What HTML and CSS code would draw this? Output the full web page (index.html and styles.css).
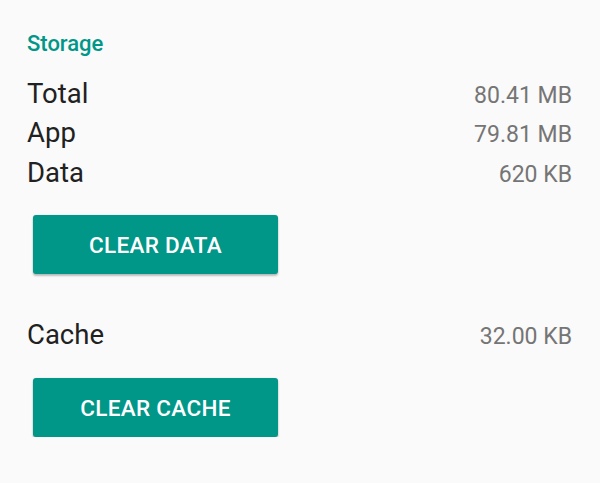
FILE: index.html
```html
<!DOCTYPE html>
<html>
<head>
<meta charset="utf-8">
<link rel="stylesheet" href="styles.css">
</head>
<body>
<div class="section">
  <div class="header">Storage</div>
  <div class="rows first">
    <div class="row"><span class="label">Total</span><span class="value">80.41 MB</span></div>
    <div class="row"><span class="label">App</span><span class="value">79.81 MB</span></div>
    <div class="row"><span class="label">Data</span><span class="value">620 KB</span></div>
  </div>
  <button class="btn">Clear data</button>
  <div class="rows cache">
    <div class="row"><span class="label">Cache</span><span class="value">32.00 KB</span></div>
  </div>
  <button class="btn">Clear cache</button>
</div>
</body>
</html>
```
FILE: styles.css
```css
html, body {
  margin: 0;
  padding: 0;
  background: #fafafa;
  font-family: Roboto, "Noto Sans", sans-serif;
}
.section {
  padding: 28.5px 28px 0 27px;
  display: flex;
  flex-direction: column;
  align-items: stretch;
}
.header {
  color: #009688;
  font-size: 22px;
  font-weight: 500;
  line-height: 30px;
}
.rows.first {
  margin-top: 15px;
}
.row {
  display: flex;
  justify-content: space-between;
  align-items: baseline;
  height: 39.5px;
  line-height: 39.5px;
}
.label {
  color: #212121;
  font-size: 27.5px;
}
.value {
  color: #757575;
  font-size: 23px;
}
.btn {
  align-self: flex-start;
  margin: 22.8px 0 0 6px;
  width: 245px;
  height: 59px;
  border: none;
  border-radius: 3px;
  background: #009688;
  color: #fff;
  font-family: Roboto, "Noto Sans", sans-serif;
  font-size: 22.5px;
  font-weight: 500;
  letter-spacing: 0.3px;
  text-transform: uppercase;
  box-shadow: 0 2px 2px rgba(0,0,0,0.24), 0 0 2px rgba(0,0,0,0.12);
  padding: 2px 0 0 0;
}
.rows.cache {
  margin-top: 41.7px;
}
```
